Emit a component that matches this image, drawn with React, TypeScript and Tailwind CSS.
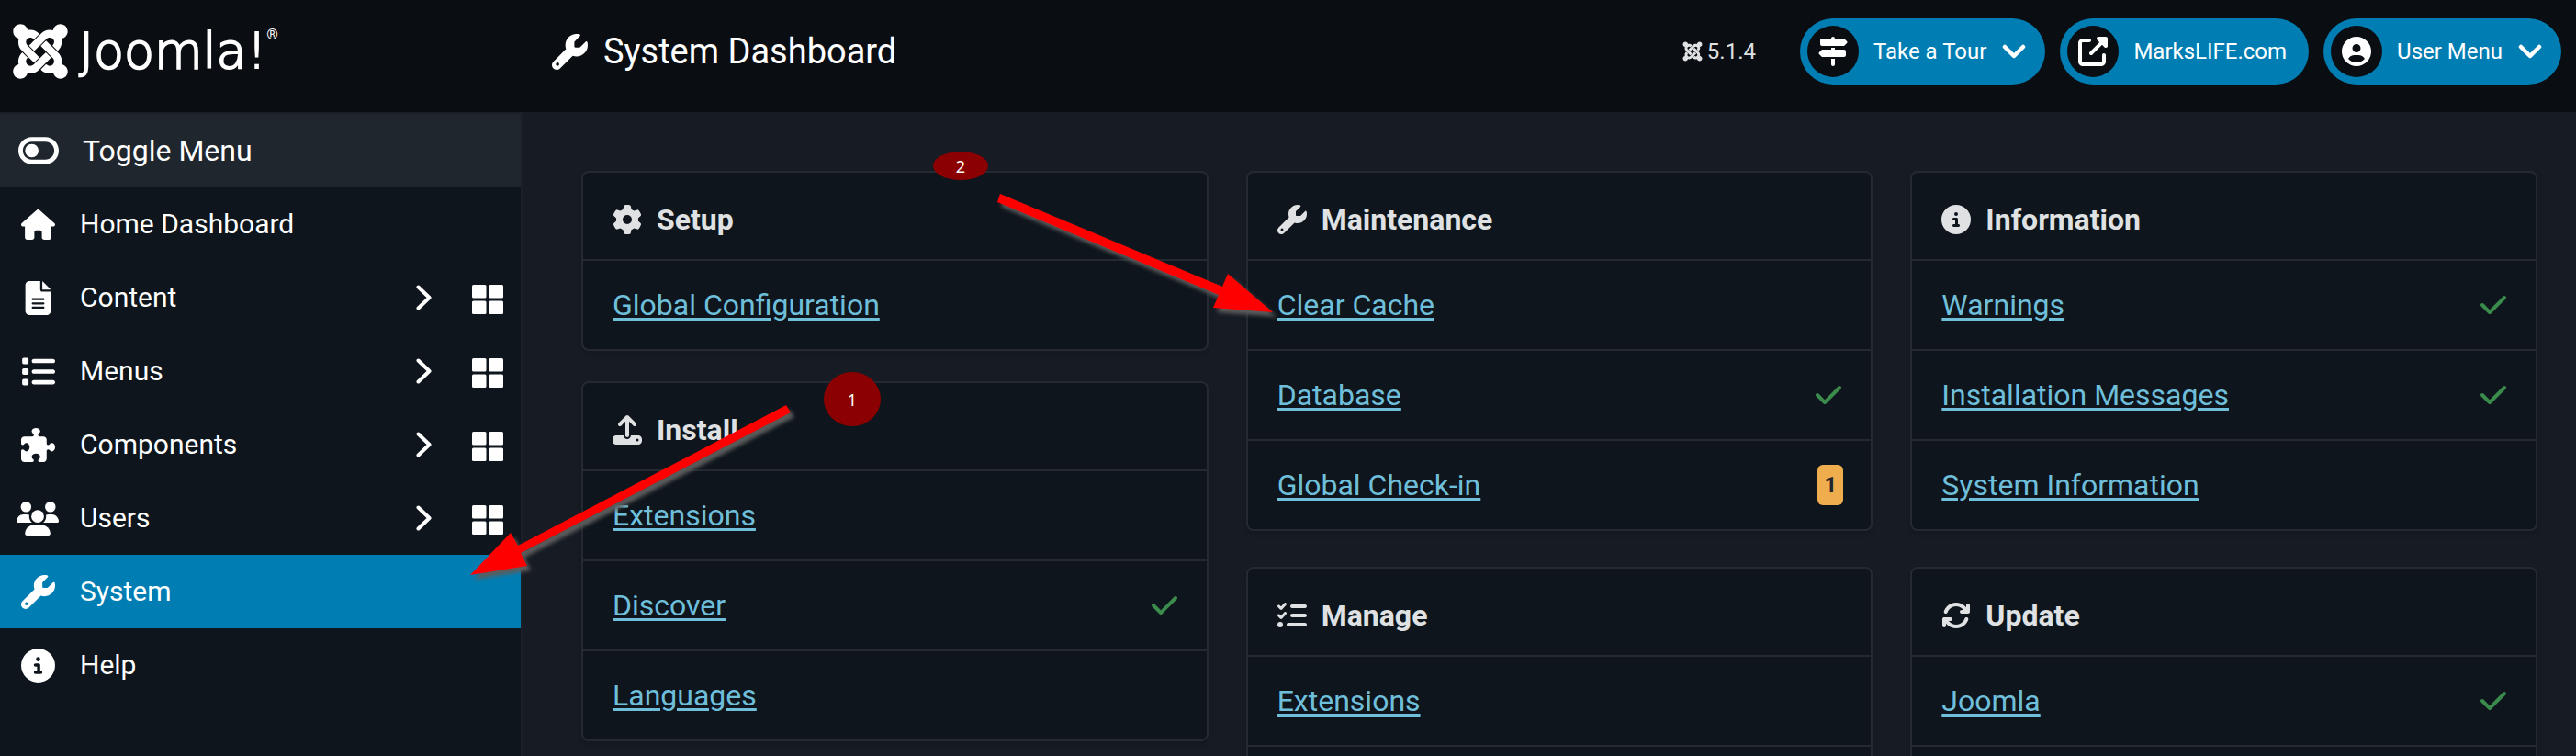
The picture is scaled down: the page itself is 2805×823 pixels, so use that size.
import type { ReactNode } from "react";
import {
  FaArrowsRotate,
  FaCheck,
  FaCircleInfo,
  FaCircleUser,
  FaFileLines,
  FaGear,
  FaHouse,
  FaJoomla,
  FaList,
  FaListCheck,
  FaPuzzlePiece,
  FaSignsPost,
  FaToggleOff,
  FaUpload,
  FaUpRightFromSquare,
  FaWrench,
} from "react-icons/fa6";

type NavItem = { label: string; icon: ReactNode; expandable?: boolean; active?: boolean };
type CardItem = { label: string; ok?: boolean; count?: number };
type Card = { title: string; icon: ReactNode; items: CardItem[]; continues?: boolean };

function UsersIcon() {
  return (
    <svg width="46" height="37" viewBox="0 0 640 512" fill="currentColor" aria-hidden="true">
      <circle cx="144" cy="80" r="80" />
      <circle cx="512" cy="80" r="80" />
      <path d="M0 298.700C0 239.800 47.800 192 106.700 192h42.700c15.900 0 31 3.500 44.600 9.700-1.300 7.200-1.900 14.700-1.900 22.300 0 38.200 16.800 72.500 43.300 96H21.300C9.600 320 0 310.400 0 298.700z" />
      <path d="M405.300 320h-.7c26.600-23.500 43.300-57.800 43.300-96 0-7.600-.7-15-1.900-22.300 13.600-6.300 28.700-9.700 44.600-9.700h42.700C592.200 192 640 239.800 640 298.700c0 11.800-9.600 21.300-21.300 21.300H405.300z" />
      <circle cx="320" cy="224" r="96" />
      <path d="M128 485.300C128 411.700 187.700 352 261.300 352h117.400C452.300 352 512 411.700 512 485.300c0 14.700-11.900 26.700-26.700 26.700H154.700c-14.700 0-26.700-11.900-26.700-26.700z" />
    </svg>
  );
}

function ChevronRight() {
  return (
    <svg
      width="17"
      height="28"
      viewBox="0 0 17 28"
      fill="none"
      stroke="currentColor"
      strokeWidth="4"
      strokeLinecap="round"
      strokeLinejoin="round"
      aria-hidden="true"
    >
      <path d="M2.500 2.500 14.500 14 2.500 25.500" />
    </svg>
  );
}

function ChevronDown() {
  return (
    <svg
      width="28"
      height="16"
      viewBox="0 0 28 16"
      fill="none"
      stroke="currentColor"
      strokeWidth="4.500"
      strokeLinecap="round"
      strokeLinejoin="round"
      aria-hidden="true"
    >
      <path d="M4 3 14 13 24 3" />
    </svg>
  );
}

function GridIcon() {
  return (
    <svg width="34" height="32" viewBox="0 0 34 32" fill="currentColor" aria-hidden="true">
      <rect x="0" y="0" width="15.5" height="14.5" rx="1.5" />
      <rect x="18.5" y="0" width="15.5" height="14.5" rx="1.5" />
      <rect x="0" y="17.5" width="15.5" height="14.5" rx="1.5" />
      <rect x="18.5" y="17.5" width="15.5" height="14.5" rx="1.5" />
    </svg>
  );
}

const nav: NavItem[] = [
  { label: "Home Dashboard", icon: <FaHouse size={37} /> },
  { label: "Content", icon: <FaFileLines size={37} />, expandable: true },
  { label: "Menus", icon: <FaList size={37} />, expandable: true },
  { label: "Components", icon: <FaPuzzlePiece size={37} />, expandable: true },
  { label: "Users", icon: <UsersIcon />, expandable: true },
  { label: "System", icon: <FaWrench size={37} />, active: true },
  { label: "Help", icon: <FaCircleInfo size={37} /> },
];

const leftCards: Card[] = [
  { title: "Setup", icon: <FaGear size={32} />, items: [{ label: "Global Configuration" }] },
  {
    title: "Install",
    icon: <FaUpload size={32} />,
    items: [{ label: "Extensions" }, { label: "Discover", ok: true }, { label: "Languages" }],
  },
];

const middleCards: Card[] = [
  {
    title: "Maintenance",
    icon: <FaWrench size={32} />,
    items: [{ label: "Clear Cache" }, { label: "Database", ok: true }, { label: "Global Check-in", count: 1 }],
  },
  { title: "Manage", icon: <FaListCheck size={32} />, items: [{ label: "Extensions" }], continues: true },
];

const rightCards: Card[] = [
  {
    title: "Information",
    icon: <FaCircleInfo size={32} />,
    items: [
      { label: "Warnings", ok: true },
      { label: "Installation Messages", ok: true },
      { label: "System Information" },
    ],
  },
  { title: "Update", icon: <FaArrowsRotate size={32} />, items: [{ label: "Joomla", ok: true }], continues: true },
];

function CardPanel({ card }: { card: Card }) {
  return (
    <section className="shrink-0 rounded-lg border-2 border-[#252a32] bg-[#0e151c] shadow-md">
      <h2 className="flex h-[96px] items-center gap-4 border-b-2 border-[#252a32] px-8 pt-2 text-[32px] leading-10 font-bold text-[#dfe1e3]">
        {card.icon}
        {card.title}
      </h2>
      <ul className="divide-y-2 divide-[#252a32]">
        {card.items.map((item) => (
          <li key={item.label} className="flex h-[98px] items-center justify-between pr-[30px] pl-8 last:h-[96px]">
            <a
              href="#"
              className="text-[32px] leading-10 text-[#6fbfdb] underline decoration-[3px] underline-offset-[3px]"
            >
              {item.label}
            </a>
            {item.ok && <FaCheck size={32} className="text-[#3a8b4c]" />}
            {item.count !== undefined && (
              <span className="flex h-11 w-7 items-center justify-center rounded-md bg-[#f0ad4e] text-2xl font-bold text-[#22262a]">
                {item.count}
              </span>
            )}
          </li>
        ))}
        {card.continues && <li className="h-[98px]" />}
      </ul>
    </section>
  );
}

function HeaderButton({ icon, label, menu }: { icon: ReactNode; label: string; menu?: boolean }) {
  return (
    <button
      type="button"
      className={`flex h-[72px] items-center gap-4 rounded-full bg-[#007eb4] pl-2 text-2xl text-white ${menu ? "pr-5" : "pr-6"}`}
    >
      <span className="flex size-14 items-center justify-center rounded-full bg-[#0a0d12]">{icon}</span>
      {label}
      {menu && <ChevronDown />}
    </button>
  );
}

function Annotations() {
  return (
    <div className="pointer-events-none absolute inset-0">
      <svg className="absolute top-0 left-0" width="1400" height="700" viewBox="0 0 1400 700" aria-hidden="true">
        <g fill="#ff0000" className="drop-shadow-[4px_5px_2px_#5c5c5c]">
          <polygon points="856,441 564,594 556,580 512,626 574,616 567,602 861,449" />
          <polygon points="1089,211 1331,312 1337,298 1386,340 1321,335 1327,321 1086,220" />
        </g>
      </svg>
      <span className="absolute top-[165px] left-[1016px] flex h-[31px] w-[60px] items-center justify-center rounded-[50%] bg-[#8b0000] font-['Noto_Sans',sans-serif] text-lg text-white">
        2
      </span>
      <span className="absolute top-[405px] left-[897px] flex h-[59px] w-[62px] items-center justify-center rounded-[50%] bg-[#8b0000] font-['Noto_Sans',sans-serif] text-lg text-white">
        1
      </span>
    </div>
  );
}

export default function App() {
  return (
    <div className="relative flex h-screen flex-col overflow-hidden bg-[#171b24] font-['Roboto',sans-serif] text-white">
      <header className="flex h-[122px] shrink-0 items-center bg-[#0a0d12] pb-[10px]">
        <a href="#" className="flex w-[569px] shrink-0 items-center gap-2 pl-[10px]">
          <FaJoomla size={68} />
          <span className="flex items-start leading-none">
            <span className="font-['DejaVu_Sans',sans-serif] text-[54px] leading-[60px] font-extralight [-webkit-text-stroke:2px_white]">
              Joomla!
            </span>
            <span className="pt-1 text-base leading-4">®</span>
          </span>
        </a>
        <h1 className="flex items-center gap-[17px] pl-8 text-[38px] leading-12">
          <FaWrench size={39} />
          System Dashboard
        </h1>
        <div className="ml-auto flex items-center gap-4 pr-4">
          <span className="mr-8 flex items-center gap-1 text-2xl text-[#dfe1e3]">
            <FaJoomla size={24} />
            5.1.4
          </span>
          <HeaderButton icon={<FaSignsPost size={32} />} label="Take a Tour" menu />
          <HeaderButton icon={<FaUpRightFromSquare size={32} />} label="MarksLIFE.com" />
          <HeaderButton icon={<FaCircleUser size={32} />} label="User Menu" menu />
        </div>
      </header>

      <div className="flex min-h-0 flex-1">
        <nav className="w-[569px] shrink-0 border-r-2 border-[#1b2028] bg-[#0e151c] text-[30px] leading-10">
          <button
            type="button"
            className="flex h-[82px] w-full items-center gap-[26px] border-t-2 border-[#1b2028] bg-[#20262d] pl-5 text-left text-[32px]"
          >
            <FaToggleOff size={44} />
            Toggle Menu
          </button>
          <ul>
            {nav.map((item) => (
              <li
                key={item.label}
                className={`flex h-20 items-center pr-[19px] ${item.active ? "bg-[#007eb4]" : ""}`}
              >
                <a href="#" className="flex flex-1 items-center pl-[17px]">
                  <span className="flex w-12 justify-center">{item.icon}</span>
                  <span className="pl-[22px]">{item.label}</span>
                </a>
                {item.expandable && (
                  <div className="flex items-center gap-11">
                    <ChevronRight />
                    <a href="#" aria-label={`${item.label} dashboard`} className="pt-1">
                      <GridIcon />
                    </a>
                  </div>
                )}
              </li>
            ))}
          </ul>
        </nav>

        <main className="grid min-w-0 flex-1 grid-cols-3 gap-x-[41px] overflow-hidden pt-16 pr-[42px] pl-16">
          <div className="flex flex-col gap-[33px]">
            {leftCards.map((card) => (
              <CardPanel key={card.title} card={card} />
            ))}
          </div>
          <div className="flex flex-col gap-[39px]">
            {middleCards.map((card) => (
              <CardPanel key={card.title} card={card} />
            ))}
          </div>
          <div className="flex flex-col gap-[39px]">
            {rightCards.map((card) => (
              <CardPanel key={card.title} card={card} />
            ))}
          </div>
        </main>
      </div>

      <Annotations />
    </div>
  );
}
